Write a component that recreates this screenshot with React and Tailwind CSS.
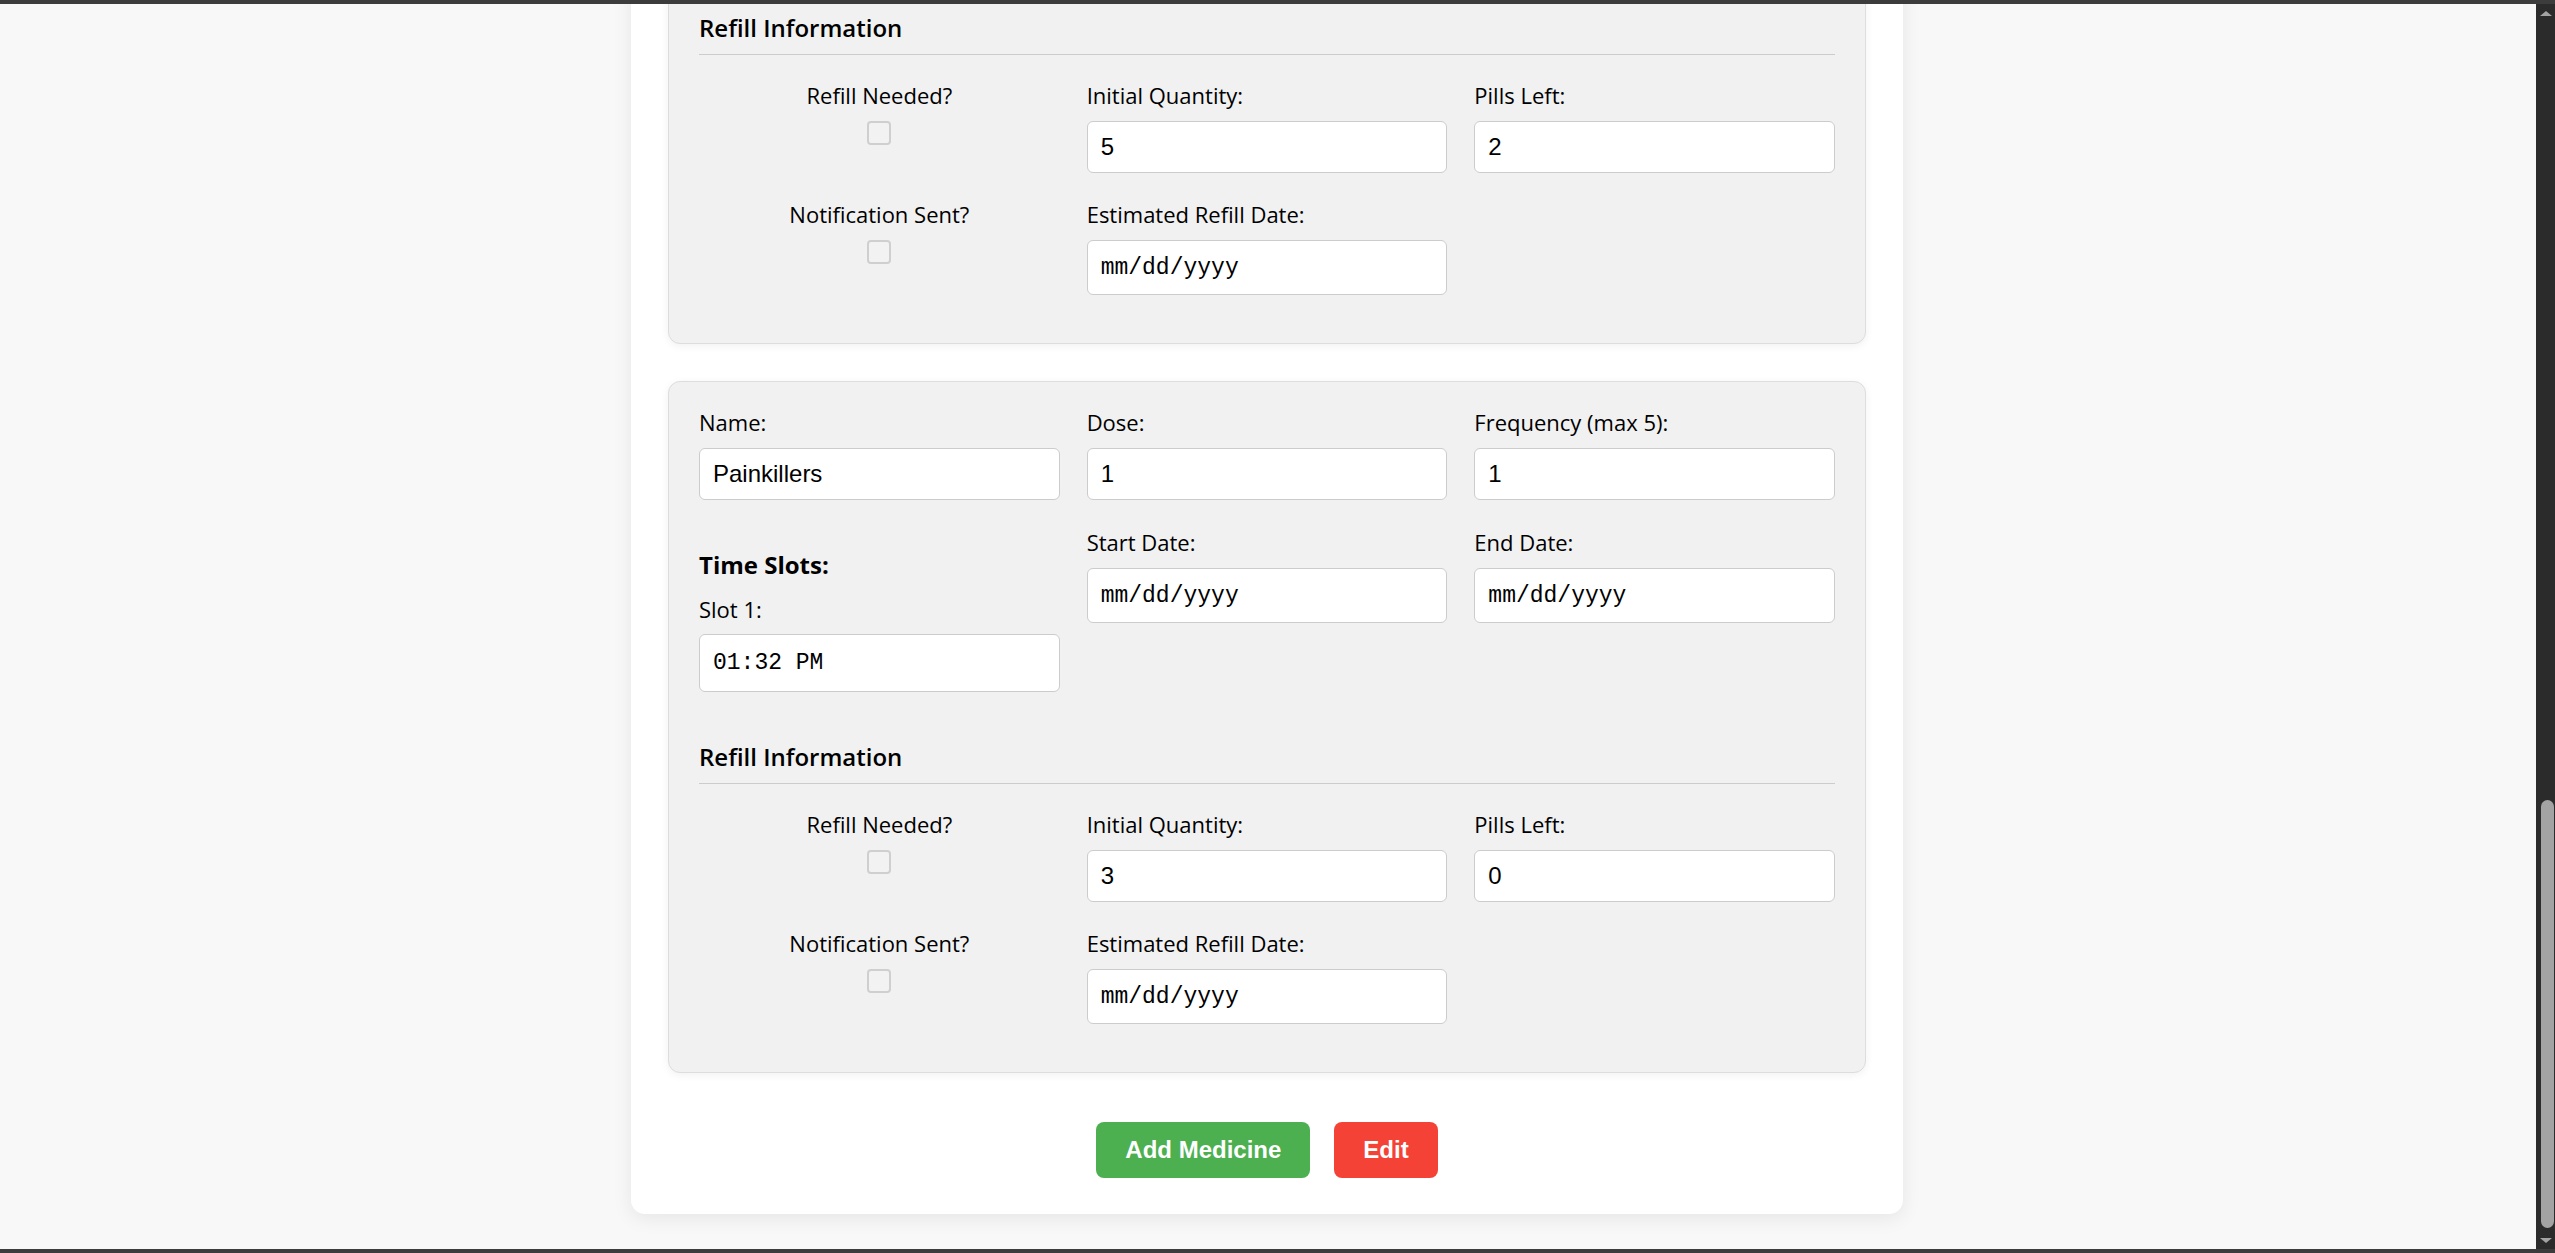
import React from 'react'

const medicines = [
  {
    name: 'Vitamin D',
    dose: '1',
    frequency: '1',
    slots: ['08:00 AM'],
    initialQuantity: '5',
    pillsLeft: '2',
  },
  {
    name: 'Painkillers',
    dose: '1',
    frequency: '1',
    slots: ['01:32 PM'],
    initialQuantity: '3',
    pillsLeft: '0',
  },
]

const labelCls = "block text-[22px] leading-[28px] font-medium text-black font-['Open_Sans',sans-serif]"
const textInputCls =
  "w-full h-[52px] px-[13px] bg-white border border-[#cccccc] rounded-[6px] text-[24px] text-black font-['Liberation_Sans',Arial,sans-serif] outline-none"
const monoInputCls =
  "w-full px-[13px] bg-white border border-[#cccccc] rounded-[6px] text-[23px] text-black font-['Liberation_Mono',monospace] outline-none"

const Field = ({ label, value, mono, tall }) => (
  <div className="flex flex-col">
    <label className={`${labelCls} mb-[12px]`}>{label}</label>
    <input
      readOnly
      value={value}
      className={mono ? `${monoInputCls} ${tall ? 'h-[58px]' : 'h-[55px]'}` : textInputCls}
    />
  </div>
)

const Checkbox = ({ label }) => (
  <div className="flex flex-col items-center">
    <label className={`${labelCls} mb-[12px] text-center`}>{label}</label>
    <span className="block w-[24px] h-[24px] rounded-[4px] border-2 border-[#cfcfcf] bg-[#f2f2f2]" />
  </div>
)

const MedicineSection = ({ med }) => (
  <section className="border border-[#dddddd] rounded-[12px] bg-[#f1f1f1] px-[30px] pt-[26px] pb-[48px] shadow-[0_2px_8px_rgba(0,0,0,0.06)]">
    <div className="grid grid-cols-3 gap-x-[27px] gap-y-[28px] items-start">
      <Field label="Name:" value={med.name} />
      <Field label="Dose:" value={med.dose} />
      <Field label="Frequency (max 5):" value={med.frequency} />

      <div className="flex flex-col">
        <h4 className="mt-[21px] text-[24px] leading-[32px] font-bold text-black font-['Open_Sans',sans-serif]">
          Time Slots:
        </h4>
        {med.slots.map((slot, i) => (
          <div key={i} className="flex flex-col mt-[14px]">
            <label className={`${labelCls} mb-[11px]`}>Slot {i + 1}:</label>
            <input readOnly value={slot} className={`${monoInputCls} h-[58px]`} />
          </div>
        ))}
      </div>
      <Field label="Start Date:" value="mm/dd/yyyy" mono />
      <Field label="End Date:" value="mm/dd/yyyy" mono />
    </div>

    <h3 className="mt-[49px] text-[24px] leading-[32px] font-semibold text-black font-['Open_Sans',sans-serif]">
      Refill Information
    </h3>
    <hr className="mt-[10px] border-0 border-t border-[#cccccc]" />

    <div className="grid grid-cols-3 gap-x-[27px] gap-y-[27px] mt-[26px] items-start">
      <Checkbox label="Refill Needed?" />
      <Field label="Initial Quantity:" value={med.initialQuantity} />
      <Field label="Pills Left:" value={med.pillsLeft} />

      <Checkbox label="Notification Sent?" />
      <Field label="Estimated Refill Date:" value="mm/dd/yyyy" mono />
      <div />
    </div>
  </section>
)

const Scrollbar = () => (
  <div className="w-[19px] bg-[#2b2b2b] flex flex-col items-center">
    <div className="mt-[7px] w-0 h-0 border-l-[6px] border-r-[6px] border-b-[5px] border-l-transparent border-r-transparent border-b-[#a3a3a3]" />
    <div className="flex-1" />
    <div className="w-[13px] h-[428px] ml-[3px] rounded-full bg-[#a3a3a3]" />
    <div className="mt-[10px] mb-[6px] w-0 h-0 border-l-[6px] border-r-[6px] border-t-[5px] border-l-transparent border-r-transparent border-t-[#a3a3a3]" />
  </div>
)

const App = () => {
  return (
    <div className="w-[2555px] h-[1253px] flex flex-col overflow-hidden bg-[#f8f8f8]">
      <div className="h-[4px] bg-[#3c3c3c]" />
      <div className="flex flex-1 min-h-0">
        <div className="flex-1 overflow-hidden">
          <div className="w-[1272px] ml-[631px] mt-[-389px] bg-white rounded-[14px] shadow-[0_4px_20px_rgba(0,0,0,0.08)] px-[37px] pt-[37px] pb-[36px]">
            <div className="flex flex-col gap-[37px]">
              {medicines.map((med, i) => (
                <MedicineSection key={i} med={med} />
              ))}
            </div>
            <div className="flex justify-center gap-[24px] mt-[49px]">
              <button className="h-[56px] px-[29px] rounded-[8px] bg-[#4caf50] text-white text-[24px] font-bold font-['Liberation_Sans',Arial,sans-serif]">
                Add Medicine
              </button>
              <button className="h-[56px] px-[29px] rounded-[8px] bg-[#f44336] text-white text-[24px] font-bold font-['Liberation_Sans',Arial,sans-serif]">
                Edit
              </button>
            </div>
          </div>
        </div>
        <Scrollbar />
      </div>
      <div className="h-[4px] bg-[#3c3c3c]" />
    </div>
  )
}

export default App
